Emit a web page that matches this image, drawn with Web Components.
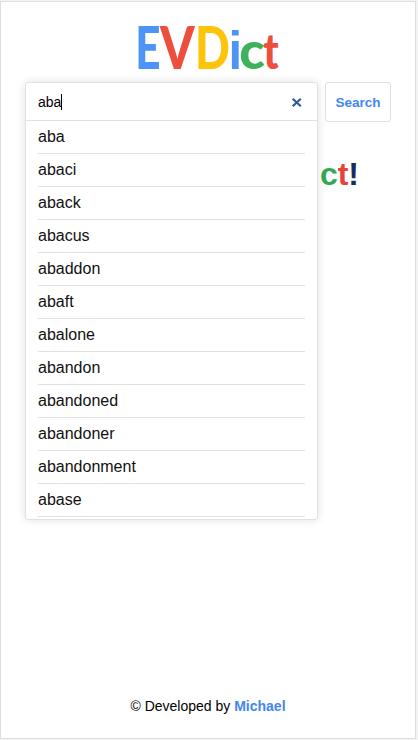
<!DOCTYPE html>
<html lang="en">
<head>
<meta charset="utf-8">
<title>EVDict</title>
<style>
html,body{margin:0;height:100%;background:#f3f3f3;font-family:"Liberation Sans",Arial,sans-serif;font-size:14px;color:#000}
body{overflow:hidden}
</style>
</head>
<body>
<ev-app></ev-app>
<script>
function define(name, html, setup) {
  customElements.define(name, class extends HTMLElement {
    connectedCallback() {
      if (this.shadowRoot) return;
      this.attachShadow({ mode: 'open' }).innerHTML = html;
      if (setup) setup(this);
    }
  });
}

define('ev-logo', `
<style>:host{display:block;width:142px;height:46px}svg{display:block;overflow:visible}text{font-family:Lato,sans-serif;font-weight:700}.heavy{font-weight:900}.square{font-family:"Liberation Sans",Arial,sans-serif}</style>
<svg width="142" height="46" viewBox="137 25 142 46" aria-label="EVDict">
  <text transform="translate(135.3 69) scale(.74 1)" font-size="59.5" fill="#4c94f6" class="heavy">E</text>
  <text transform="translate(160 69) scale(.83 1)" font-size="59.5" fill="#ee4e3e" class="heavy">V</text>
  <text transform="translate(194.9 69) scale(.77 1)" font-size="59.5" fill="#fdc409" class="heavy">D</text>
  <text transform="translate(228.6 69) scale(1 1.08)" font-size="49" fill="#4c94f6" class="square">i</text>
  <text transform="translate(239.3 69) scale(1.02 1)" font-size="52" fill="#3eb25b" class="heavy">c</text>
  <text transform="translate(263.3 69) scale(.82 1)" font-size="50" fill="#ee4e3e" class="heavy">t</text>
</svg>`);

define('ev-field', `
<style>
:host{box-sizing:border-box;display:flex;align-items:center;justify-content:space-between;height:37px;padding:1px 15px 0 12px;font-size:14px}
.value{display:flex;align-items:center}
.caret{width:1px;height:16px;background:#000}
svg{display:block;margin-top:1px}
</style>
<div class="value"><slot></slot><span class="caret"></span></div>
<svg width="11" height="11" viewBox="0 0 11 11"><path d="M1.7 1.7 9.8 9.3M9.8 1.7 1.7 9.3" stroke="#305a9c" stroke-width="2.2"/></svg>`);

define('ev-suggestion', `
<style>:host{box-sizing:border-box;display:block;height:33px;line-height:31px;font-size:16px;color:#111;border-bottom:1px solid #dfe1e5}</style><slot></slot>`);

define('ev-suggestions', `
<style>:host{display:block;border-top:1px solid #dfe1e5;padding:0 12px 2px}</style><div></div>`,
host => {
  const box = host.shadowRoot.querySelector('div');
  for (const word of host.getAttribute('words').split(' ')) {
    const row = document.createElement('ev-suggestion');
    row.textContent = word;
    box.append(row);
  }
});

define('ev-search-box', `
<style>
:host{position:relative;z-index:1;display:block;width:293px;height:40px}
.panel{box-sizing:border-box;position:absolute;top:0;left:0;width:293px;background:#fff;border:1px solid #dfe1e5;border-radius:3px;box-shadow:0 0 10px rgba(0,0,0,.12)}
</style>
<div class="panel"><slot></slot></div>`);

define('ev-button', `
<style>:host{box-sizing:border-box;display:flex;align-items:center;justify-content:center;width:66px;height:40px;border:1px solid #dfe1e5;border-radius:3px;color:#4285f4;font-weight:700;font-size:13.5px}</style><slot></slot>`);

define('ev-welcome', `
<style>:host{display:flex;justify-content:flex-end;font-size:32px;line-height:36px;font-weight:700;color:#1b2a5c}.c{color:#34a853}.t{color:#ea4335}</style>
<span class="c">c</span><span class="t">t</span><span>!</span>`);

define('ev-footer', `
<style>:host{display:block;text-align:center;line-height:16px}b{color:#4285f4}</style>
© Developed by <b>Michael</b>`);

define('ev-app', `
<style>
:host{box-sizing:border-box;display:flex;flex-direction:column;width:416px;height:738px;margin-top:1px;background:#fff;border:1px solid #dedede;padding:23px 24px 24px}
ev-logo{margin:0 auto 11px}
.bar{display:flex;gap:7px}
ev-welcome{margin:34px 32px 0 0}
ev-footer{margin-top:auto}
</style>
<ev-logo></ev-logo>
<div class="bar">
  <ev-search-box><ev-field>aba</ev-field><ev-suggestions words="aba abaci aback abacus abaddon abaft abalone abandon abandoned abandoner abandonment abase"></ev-suggestions></ev-search-box>
  <ev-button>Search</ev-button>
</div>
<ev-welcome></ev-welcome>
<ev-footer></ev-footer>`);
</script>
</body>
</html>
